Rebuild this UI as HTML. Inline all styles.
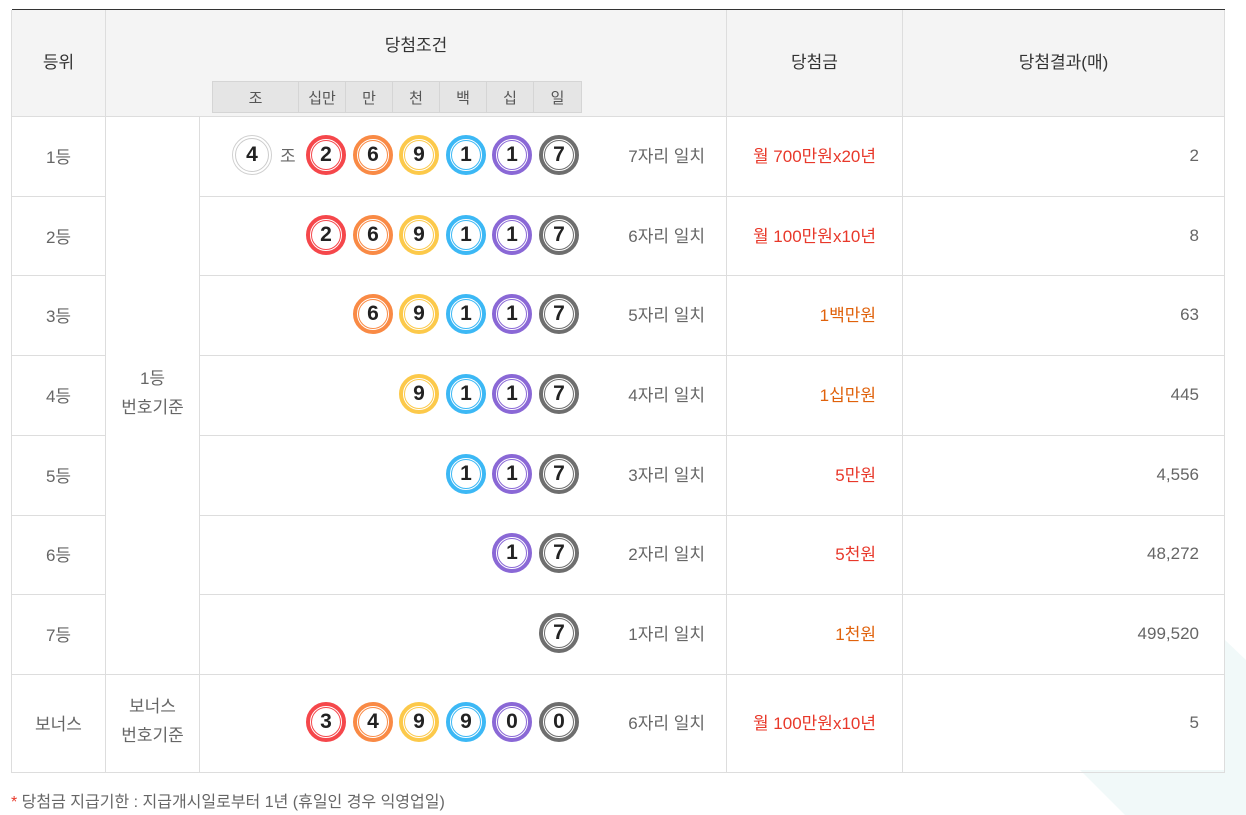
<!DOCTYPE html>
<html><head><meta charset="utf-8"><style>
*{margin:0;padding:0;box-sizing:border-box}
body{width:1246px;height:815px;background:#fff;position:relative;overflow:hidden;font-family:"Liberation Sans","Noto Sans CJK KR",sans-serif;color:#666;font-size:17px}
.a{position:absolute;line-height:24px}
.c{position:absolute;display:flex;align-items:center;justify-content:center;text-align:center}
.hl{position:absolute;height:1px;background:#ddd}
.vl{position:absolute;width:1px;background:#ddd}
.b{position:absolute;width:40px;height:40px;border-radius:50%;display:flex;align-items:center;justify-content:center;font-weight:bold;font-size:21px;color:#222;background:#fff}
.b::before{content:"";position:absolute;inset:0;border-radius:50%;border:4px solid var(--k)}
.b::after{content:"";position:absolute;inset:5px;border-radius:50%;border:1px solid var(--k)}
.r{--k:#f5474b}.o{--k:#f98a45}.y{--k:#fcc94a}.u{--k:#3cb8f5}.p{--k:#8a68d6}.g{--k:#6e6e6e}.w{--k:#d0d0d0}
.w::before{border-width:1px}.w::after{inset:3px;border-color:#ccc}
.sub{position:absolute;top:81px;height:32px;background:#e5e5e5;border:1px solid #d5d5d5;display:flex;align-items:center;justify-content:center;font-size:15px;color:#555}
.red{color:#e8382a}.org{color:#e0620c}
.t{position:absolute;text-align:right;white-space:nowrap}
.n{position:absolute;text-align:right;line-height:24px;height:24px;white-space:nowrap}
</style></head><body>
<svg class="a" style="left:1000px;top:620px" width="246" height="195"><polygon points="225,20 246,40 246,195 125,195 80,150 225,150" fill="#f1f9f9"/></svg>
<div class="a" style="left:12px;top:10px;width:1213px;height:107px;background:#f4f4f4"></div>
<div class="a" style="left:12px;top:9px;width:1213px;height:1px;background:#333"></div>
<div class="vl" style="left:11px;top:10px;height:763px"></div>
<div class="vl" style="left:1224px;top:10px;height:763px"></div>
<div class="vl" style="left:105px;top:10px;height:763px"></div>
<div class="vl" style="left:199px;top:116px;height:657px"></div>
<div class="vl" style="left:726px;top:10px;height:763px"></div>
<div class="vl" style="left:902px;top:10px;height:763px"></div>
<div class="hl" style="left:11px;top:116px;width:1214px"></div>
<div class="hl" style="left:11px;top:196px;width:95px"></div><div class="hl" style="left:199px;top:196px;width:1026px"></div>
<div class="hl" style="left:11px;top:275px;width:95px"></div><div class="hl" style="left:199px;top:275px;width:1026px"></div>
<div class="hl" style="left:11px;top:355px;width:95px"></div><div class="hl" style="left:199px;top:355px;width:1026px"></div>
<div class="hl" style="left:11px;top:435px;width:95px"></div><div class="hl" style="left:199px;top:435px;width:1026px"></div>
<div class="hl" style="left:11px;top:515px;width:95px"></div><div class="hl" style="left:199px;top:515px;width:1026px"></div>
<div class="hl" style="left:11px;top:594px;width:95px"></div><div class="hl" style="left:199px;top:594px;width:1026px"></div>
<div class="hl" style="left:11px;top:674px;width:1214px"></div>
<div class="hl" style="left:11px;top:772px;width:1214px"></div>
<div class="c" style="left:12px;top:45px;width:93px;height:30px;color:#333">등위</div>
<div class="c" style="left:106px;top:28px;width:620px;height:30px;color:#333">당첨조건</div>
<div class="c" style="left:727px;top:45px;width:175px;height:30px;color:#333">당첨금</div>
<div class="c" style="left:903px;top:45px;width:321px;height:30px;color:#333">당첨결과(매)</div>
<div class="sub" style="left:212px;width:87px">조</div>
<div class="sub" style="left:298px;width:48px">십만</div>
<div class="sub" style="left:345px;width:48px">만</div>
<div class="sub" style="left:392px;width:48px">천</div>
<div class="sub" style="left:439px;width:48px">백</div>
<div class="sub" style="left:486px;width:48px">십</div>
<div class="sub" style="left:533px;width:49px">일</div>
<div class="c" style="left:106px;top:358px;width:93px;height:70px;line-height:29px">1등<br>번호기준</div>
<div class="c" style="left:106px;top:688px;width:93px;height:65px;line-height:29px">보너스<br>번호기준</div>

<div class="c" style="left:12px;top:140px;width:93px;height:30px">1등</div>
<div class="c" style="left:12px;top:220px;width:93px;height:30px">2등</div>
<div class="c" style="left:12px;top:299px;width:93px;height:30px">3등</div>
<div class="c" style="left:12px;top:379px;width:93px;height:30px">4등</div>
<div class="c" style="left:12px;top:459px;width:93px;height:30px">5등</div>
<div class="c" style="left:12px;top:538px;width:93px;height:30px">6등</div>
<div class="c" style="left:12px;top:618px;width:93px;height:30px">7등</div>
<div class="c" style="left:12px;top:707px;width:93px;height:30px">보너스</div>

<div class="b w" style="left:232px;top:135px">4</div><div class="a" style="left:280px;top:145px">조</div>
<div class="b r" style="left:306px;top:135px">2</div><div class="b o" style="left:353px;top:135px">6</div><div class="b y" style="left:399px;top:135px">9</div><div class="b u" style="left:446px;top:135px">1</div><div class="b p" style="left:492px;top:135px">1</div><div class="b g" style="left:539px;top:135px">7</div>
<div class="b r" style="left:306px;top:215px">2</div><div class="b o" style="left:353px;top:215px">6</div><div class="b y" style="left:399px;top:215px">9</div><div class="b u" style="left:446px;top:215px">1</div><div class="b p" style="left:492px;top:215px">1</div><div class="b g" style="left:539px;top:215px">7</div>
<div class="b o" style="left:353px;top:294px">6</div><div class="b y" style="left:399px;top:294px">9</div><div class="b u" style="left:446px;top:294px">1</div><div class="b p" style="left:492px;top:294px">1</div><div class="b g" style="left:539px;top:294px">7</div>
<div class="b y" style="left:399px;top:374px">9</div><div class="b u" style="left:446px;top:374px">1</div><div class="b p" style="left:492px;top:374px">1</div><div class="b g" style="left:539px;top:374px">7</div>
<div class="b u" style="left:446px;top:454px">1</div><div class="b p" style="left:492px;top:454px">1</div><div class="b g" style="left:539px;top:454px">7</div>
<div class="b p" style="left:492px;top:533px">1</div><div class="b g" style="left:539px;top:533px">7</div>
<div class="b g" style="left:539px;top:613px">7</div>
<div class="b r" style="left:306px;top:702px">3</div><div class="b o" style="left:353px;top:702px">4</div><div class="b y" style="left:399px;top:702px">9</div><div class="b u" style="left:446px;top:702px">9</div><div class="b p" style="left:492px;top:702px">0</div><div class="b g" style="left:539px;top:702px">0</div>

<div class="t" style="right:541px;top:142px">7자리 일치</div>
<div class="t" style="right:541px;top:222px">6자리 일치</div>
<div class="t" style="right:541px;top:301px">5자리 일치</div>
<div class="t" style="right:541px;top:381px">4자리 일치</div>
<div class="t" style="right:541px;top:461px">3자리 일치</div>
<div class="t" style="right:541px;top:540px">2자리 일치</div>
<div class="t" style="right:541px;top:620px">1자리 일치</div>
<div class="t" style="right:541px;top:709px">6자리 일치</div>

<div class="t red" style="right:370px;top:142px">월 700만원x20년</div>
<div class="t red" style="right:370px;top:222px">월 100만원x10년</div>
<div class="t org" style="right:370px;top:301px">1백만원</div>
<div class="t org" style="right:370px;top:381px">1십만원</div>
<div class="t red" style="right:370px;top:461px">5만원</div>
<div class="t red" style="right:370px;top:540px">5천원</div>
<div class="t org" style="right:370px;top:620px">1천원</div>
<div class="t red" style="right:370px;top:709px">월 100만원x10년</div>

<div class="n" style="right:47px;top:144px">2</div>
<div class="n" style="right:47px;top:224px">8</div>
<div class="n" style="right:47px;top:303px">63</div>
<div class="n" style="right:47px;top:383px">445</div>
<div class="n" style="right:47px;top:463px">4,556</div>
<div class="n" style="right:47px;top:542px">48,272</div>
<div class="n" style="right:47px;top:622px">499,520</div>
<div class="n" style="right:47px;top:711px">5</div>

<div class="a" style="left:11px;top:791px;font-size:16px"><span style="color:#e8382a">*</span> 당첨금 지급기한 : 지급개시일로부터 1년 (휴일인 경우 익영업일)</div>
</body></html>
